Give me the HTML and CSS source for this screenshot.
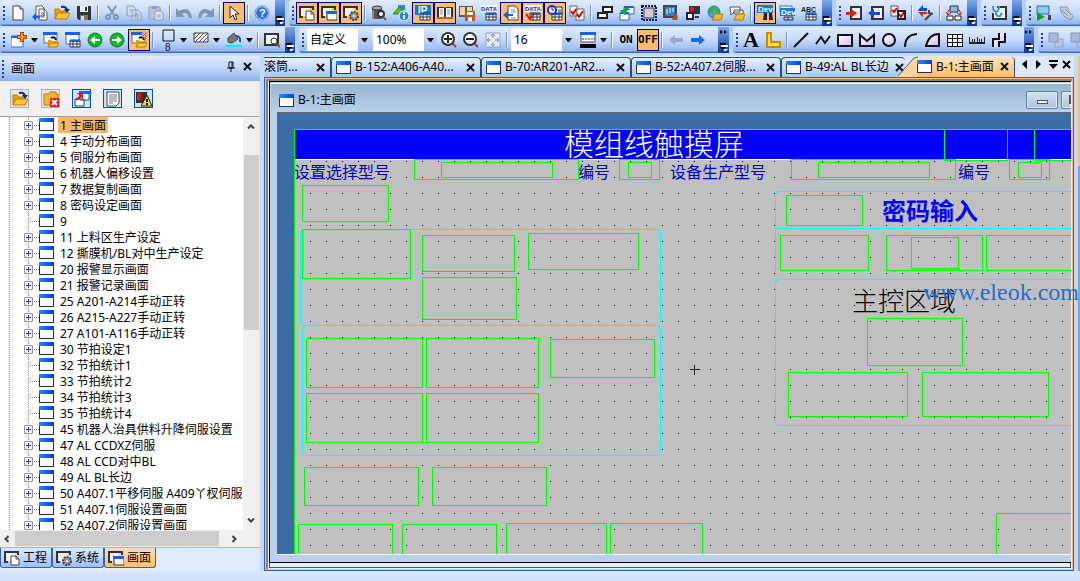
FILE: index.html
```html
<!DOCTYPE html>
<html lang="zh-CN">
<head>
<meta charset="utf-8">
<title>画面设计</title>
<link rel="stylesheet" href="styles.css">
</head>
<body>
<svg class="defs" aria-hidden="true">
  <defs>
    <linearGradient id="g-win" x1="0" x2="1"><stop offset="0" stop-color="#2f86ff"/><stop offset="1" stop-color="#0040e8"/></linearGradient>
    <linearGradient id="g-lilac" x1="0" x2="1" y2="1"><stop offset="0" stop-color="#fff"/><stop offset="1" stop-color="#d3b8f5"/></linearGradient>
    <pattern id="grid" width="16" height="16" patternUnits="userSpaceOnUse"><rect width="1" height="1" fill="#000"/></pattern>
    <pattern id="hatch" width="4" height="4" patternUnits="userSpaceOnUse"><path d="M-1 5L5-1M-1 1L1-1M3 5L5 3" stroke="#555"/></pattern>
  </defs>
  <symbol id="win" viewBox="0 0 15 13"><path d="M0 0h15v13H0z" fill="#26304a"/><path d="M1 4h13v8H1z" fill="#fbfbfe"/><path d="M0 0h15v4H0z" fill="url(#g-win)"/></symbol>
  <symbol id="new" viewBox="0 0 16 16"><path d="M3 1h7l3 3v11H3z" fill="#fff" stroke="#444"/><path d="M10 1v3h3" fill="#ccc" stroke="#444"/></symbol>
  <symbol id="pages" viewBox="0 0 16 16"><path d="M4 1h6l2 2v8H4zM7 4h5l3 3v8H7z" fill="#fff" stroke="#555"/><path d="M9 8h4M9 10h4M9 12h4" stroke="#777"/><path d="M8 11H4V8L0 12l4 4v-3h4z" fill="#1460e0"/></symbol>
  <symbol id="open" viewBox="0 0 16 16"><path d="M1 14V4h4l1 2h7v3" fill="#f0a000" stroke="#c07800"/><path d="M1 14l3-6h12l-3 6z" fill="#ffc83c" stroke="#c07800"/><path d="M7 2q5-1 6 3" fill="none" stroke="#0a2c90" stroke-width="2"/><path d="M10 4h6l-3 4z" fill="#0a2c90"/></symbol>
  <symbol id="save" viewBox="0 0 16 16"><path d="M1 1h14v14H3l-2-2z" fill="#333"/><path d="M4 1h8v6H4z" fill="#e8eef8"/><path d="M9 2h2v4H9z" fill="#333"/><path d="M4 10h8v5H4z" fill="#777"/><path d="M5 11h3v4H5z" fill="#ddd"/></symbol>
  <symbol id="cut" viewBox="0 0 16 16"><path d="M4 1l6 9M12 1L6 10" stroke="#8093b5" stroke-width="2"/><circle cx="4" cy="12" r="2" fill="none" stroke="#8093b5" stroke-width="2"/><circle cx="12" cy="12" r="2" fill="none" stroke="#8093b5" stroke-width="2"/></symbol>
  <symbol id="copy" viewBox="0 0 16 16"><path d="M1 1h6l3 3v7H1zM6 5h6l3 3v7H6z" fill="#d2ddf0" stroke="#8d9dbb"/><path d="M3 5h3M8 9h5M8 11h5M8 13h5" stroke="#8d9dbb"/></symbol>
  <symbol id="paste" viewBox="0 0 16 16"><path d="M1 2h11v12H1z" fill="#b8c6dd" stroke="#8d9dbb"/><path d="M4 1h5v3H4z" fill="#8d9dbb"/><path d="M7 6h6l2 2v7H7z" fill="#dce5f4" stroke="#8d9dbb"/><path d="M9 10h4M9 12h4" stroke="#8d9dbb"/></symbol>
  <symbol id="undo" viewBox="0 0 16 16"><path d="M0 3v9h9L6 9q5-3 7 4h3Q14 0 3 6z" fill="#8093b5"/></symbol>
  <symbol id="redo" viewBox="0 0 16 16"><path d="M16 3v9H7l3-3Q5 6 3 13H0Q2 0 13 6z" fill="#8093b5"/></symbol>
  <symbol id="arrow" viewBox="0 0 16 16"><path d="M4 1v12l3-3 2 5 2-1-2-5h4z" fill="#fff" stroke="#222"/></symbol>
  <symbol id="help" viewBox="0 0 16 16"><circle cx="8" cy="8" r="7" fill="#fff" stroke="#5a80c0"/><circle cx="8" cy="8" r="6" fill="#2b6fe0"/><text class="i-help" x="5" y="12">?</text></symbol>
  <symbol id="projpage" viewBox="0 0 16 16"><path d="M4 12H1V2h13v3" fill="none" stroke="#333" stroke-width="2"/><path d="M2 3h9v8H2z" fill="#eee"/><path d="M7 6h5l3 3v6H7z" fill="#fff" stroke="#444"/><path d="M12 6v3h3" fill="none" stroke="#444"/></symbol>
  <symbol id="projwin" viewBox="0 0 16 16"><path d="M4 12H1V2h13v3" fill="none" stroke="#333" stroke-width="2"/><path d="M2 3h9v8H2z" fill="#eee"/><path d="M6 7h10v8H6z" fill="#fff" stroke="#333"/><path d="M5 6h11v3H5z" fill="#1763f0"/></symbol>
  <symbol id="projgear" viewBox="0 0 16 16"><path d="M4 12H1V2h13v3" fill="none" stroke="#333" stroke-width="2"/><path d="M2 3h9v8H2z" fill="#eee"/><circle cx="11" cy="11" r="4" fill="#999" stroke="#444" stroke-width="2" stroke-dasharray="2 1"/><circle cx="11" cy="11" r="1" fill="#fff"/></symbol>
  <symbol id="dbsearch" viewBox="0 0 16 16"><path d="M1 3h10v11H1z" fill="#555"/><ellipse cx="6" cy="3" rx="5" ry="2" fill="#aaa" stroke="#333"/><path d="M2 5v9" stroke="#bbb"/><circle cx="10" cy="9" r="3" fill="#fff" stroke="#333" stroke-width="2"/><path d="M12 12l3 3" stroke="#85502c" stroke-width="2"/></symbol>
  <symbol id="shapesinfo" viewBox="0 0 16 16"><path d="M5 0h7v8H5z" fill="#2c83d9"/><path d="M6 2l6 7H0z" fill="#53c32d" stroke="#269612"/><circle cx="11" cy="11" r="5" fill="#2687d9" stroke="#fff"/><path d="M11 7v2M11 10v4" stroke="#fff" stroke-width="2"/></symbol>
  <symbol id="tbl" viewBox="0 0 16 16"><path d="M5 8h10v7H5z" fill="#fff" stroke="#333"/><path d="M5 8h10v2H5z" fill="#1763f0"/><path d="M5 12h10M8 9v6M12 9v6" stroke="#333"/></symbol>
  <symbol id="ip" viewBox="0 0 16 16"><path d="M0 0h16v10H0z" fill="#1778dc"/><text class="i-ip" x="3" y="9">IP</text><use href="#tbl"/></symbol>
  <symbol id="book" viewBox="0 0 16 16"><path d="M0 2h7l1 1 1-1h7v12H0z" fill="#333"/><path d="M2 3h5v9H2zM9 3h5v9H9z" fill="#fff"/><path d="M3 5h3M3 7h3M3 9h3M10 5h3M10 7h3M10 9h3" stroke="#888"/><path d="M0 13h16" stroke="#cf5f29" stroke-width="2"/></symbol>
  <symbol id="booksave" viewBox="0 0 16 16"><path d="M0 1h14v11H0z" fill="#555"/><path d="M1 2h5v8H1zM8 2h5v4H8z" fill="#ffd0a0"/><path d="M6 6h10v10H6z" fill="#d05018"/><path d="M8 7h6v3H8zM9 12h4v4H9z" fill="#fff"/></symbol>
  <symbol id="data" viewBox="0 0 16 16"><path d="M0 0h16v7H0z" fill="#fff"/><text class="i-data" x="0" y="6">DATA</text><use href="#tbl"/></symbol>
  <symbol id="datared" viewBox="0 0 16 16"><use href="#data"/><path d="M1 9l4 5 4-6" fill="none" stroke="#e01010" stroke-width="2"/></symbol>
  <symbol id="pageback" viewBox="0 0 16 16"><path d="M5 1h7l3 3v11H5z" fill="#fff" stroke="#444"/><path d="M8 5h4M8 7h5M8 13h5" stroke="#888"/><path d="M10 9H5V6l-5 4 5 4v-3h5z" fill="#1460e0"/></symbol>
  <symbol id="clocktbl" viewBox="0 0 16 16"><path d="M7 2h8v7H7z" fill="#fff" stroke="#333"/><path d="M11 5h3M11 7h3" stroke="#333"/><use href="#tbl"/><circle cx="5" cy="5" r="4" fill="#fff" stroke="#1430d8" stroke-width="2"/><path d="M5 2v3h2" fill="none" stroke="#222"/></symbol>
  <symbol id="checks" viewBox="0 0 16 16"><path d="M1 1h7v10H1zM7 4h8v11H7z" fill="#fff" stroke="#666"/><path d="M2 6l2 3 3-5M8 9l2 3 4-6" fill="none" stroke="#e00000" stroke-width="2"/></symbol>
  <symbol id="twobox" viewBox="0 0 16 16"><path d="M6 2h9v5H6zM1 8h9v5H1z" fill="#fff" stroke="#222" stroke-width="2"/></symbol>
  <symbol id="winback" viewBox="0 0 16 16"><path d="M5 2h10v7H5zM1 8h9v7H1z" fill="#fff" stroke="#2f6cad"/><path d="M5 2h10M1 8h9" stroke="#1763f0" stroke-width="2"/><path d="M12 5Q7 0 4 5H1l4 5 4-5H7" fill="#12a632"/></symbol>
  <symbol id="selbox" viewBox="0 0 16 16"><path d="M1 1h14v14H1z" fill="none" stroke="#0a1c70" stroke-width="2" stroke-dasharray="2 1"/><path d="M3 3h10v10H3z" fill="#d0d0d0" stroke="#334"/></symbol>
  <symbol id="chip" viewBox="0 0 16 16"><path d="M1 1h12v11H1z" fill="#2b7fc4" stroke="#444" stroke-width="2"/><path d="M4 4v5M7 3v5M10 3v4" stroke="#fff"/><path d="M9 15l3-7 3 3-1 4z" fill="#a35825"/></symbol>
  <symbol id="redblack" viewBox="0 0 16 16"><path d="M4 1h11v8H4z" fill="#333"/><path d="M5 2h4v6H5z" fill="#d01818"/><path d="M2 8h6v6H2z" fill="#fff" stroke="#222" stroke-width="2"/><path d="M10 12h4" stroke="#333" stroke-width="2"/></symbol>
  <symbol id="globe" viewBox="0 0 16 16"><circle cx="7" cy="7" r="6" fill="#4aa0e0" stroke="#287bb0"/><path d="M2 4q4-5 6 0l-2 5q-5 0-4-5M9 2l4 4-4 2z" fill="#37b337"/><path d="M5 15l3-6h8l-2 6z" fill="#f6b62c" stroke="#b77808"/></symbol>
  <symbol id="bubbles" viewBox="0 0 16 16"><path d="M1 2h10v5H5l-3 3zM5 5h9v4H5z" fill="#fff" stroke="#555"/><path d="M5 15l3-6h8l-2 6z" fill="#f6b62c" stroke="#b77808"/></symbol>
  <symbol id="devfind" viewBox="0 0 16 16"><path d="M0 0h16v8H0z" fill="#1778dc"/><text class="i-dev" x="1" y="7">Dev</text><path d="M7 8h3v7H6zM12 8h3l1 7h-4z" fill="#222"/></symbol>
  <symbol id="devtbl" viewBox="0 0 16 16"><path d="M1 1h12v6H1z" fill="#fff" stroke="#1778dc"/><path d="M1 3h15v8H1z" fill="#1778dc"/><text class="i-dev" x="2" y="10">Dev</text><path d="M5 12h9M5 15h9M5 12v3M9 12v3M14 12v3" stroke="#333"/></symbol>
  <symbol id="abc" viewBox="0 0 16 16"><text class="i-abc" x="0" y="7">ABC</text><use href="#tbl"/></symbol>
  <symbol id="boxin" viewBox="0 0 16 16"><path d="M5 2h10v12H5z" fill="#eee" stroke="#333" stroke-width="2"/><path d="M0 7h5V4l6 4-6 5v-3H0z" fill="#e61c1c"/></symbol>
  <symbol id="boxout" viewBox="0 0 16 16"><path d="M4 2h11v12H4z" fill="#eee" stroke="#333" stroke-width="2"/><path d="M12 7H6V4L0 8l6 5v-3h6z" fill="#1648e8"/></symbol>
  <symbol id="verify" viewBox="0 0 16 16"><path d="M1 1h7v10H1z" fill="#fff" stroke="#555"/><path d="M8 6h7v8H8z" fill="#fff" stroke="#222" stroke-width="2"/><path d="M2 5l2 2 3-4M9 9l2 3 3-5" fill="none" stroke="#e00000" stroke-width="2"/></symbol>
  <symbol id="wrench" viewBox="0 0 16 16"><path d="M0 5l5-5v3h4v3H0z" fill="#1648e8"/><path d="M9 7H0l5 5V9h4z" fill="#e61c1c"/><path d="M7 15l7-7M11 5v3l4 1" stroke="#444" stroke-width="2" fill="none"/></symbol>
  <symbol id="net" viewBox="0 0 16 16"><path d="M4 1h8v6H4z" fill="#7ec0f0" stroke="#333"/><path d="M1 11h6v4H1zM9 11h6v4H9z" fill="#fff" stroke="#222"/><path d="M4 4Q1 5 2 10M12 4q3 1 2 6M0 7l2 3 3-2M11 8l3 2 2-3" stroke="#e01818" fill="none"/></symbol>
  <symbol id="steth" viewBox="0 0 16 16"><path d="M6 2h9v12H2V8" fill="#f3f3f3" stroke="#333" stroke-width="2"/><path d="M2 1q0 5 3 6 3-1 3-6M5 7q0 5 4 4l2-3" fill="none" stroke="#4690c8" stroke-width="2"/></symbol>
  <symbol id="run" viewBox="0 0 16 16"><path d="M1 1h12v8H1z" fill="#8ccaf5" stroke="#2b6cb0"/><path d="M1 7l8 5-8 4z" fill="#0aa21c"/><path d="M12 10h3v5h-3z" fill="#444"/></symbol>
  <symbol id="hand" viewBox="0 0 16 16"><path d="M2 2h7l2 4 4 5-2 4-6-3-4-5z" fill="#c0cbe0" stroke="#8795b0"/><path d="M4 5l6 6M7 4l6 6" stroke="#8795b0"/></symbol>
  <symbol id="winplus" viewBox="0 0 16 16"><path d="M0 4h12v11H0z" fill="#fff" stroke="#4070b0"/><path d="M0 4h12v2H0z" fill="#1763f0"/><path d="M11 0v10M6 5h10" stroke="#a84800" stroke-width="4"/><path d="M11 1v8M7 5h8" stroke="#ff9030" stroke-width="2"/></symbol>
  <symbol id="winopen" viewBox="0 0 16 16"><path d="M1 1h13v10H1z" fill="#fff" stroke="#4070b0"/><path d="M0 0h14v3H0z" fill="#1763f0"/><path d="M5 15V8h3l1 1h5v2" fill="#f0a000"/><path d="M5 15l2-4h9l-2 4z" fill="#ffc83c" stroke="#b77808"/><path d="M8 6q4-2 5 2" stroke="#123" stroke-width="2" fill="none"/></symbol>
  <symbol id="wintable" viewBox="0 0 16 16"><path d="M1 1h13v11H1z" fill="#fff" stroke="#4070b0"/><path d="M0 0h15v3H0z" fill="#1763f0"/><use href="#tbl"/></symbol>
  <symbol id="prev" viewBox="0 0 16 16"><circle cx="8" cy="8" r="7" fill="#14b52a" stroke="#088a1c"/><path d="M3 8l5-4v3h5v2H8v3z" fill="#fff"/></symbol>
  <symbol id="next" viewBox="0 0 16 16"><circle cx="8" cy="8" r="7" fill="#14b52a" stroke="#088a1c"/><path d="M13 8L8 4v3H3v2h5v3z" fill="#fff"/></symbol>
  <symbol id="winclose" viewBox="0 0 16 16"><use href="#winopen"/><path d="M11 0h5v5h-5z" fill="#fff" stroke="#d05050"/><path d="M12 1l3 3M15 1l-3 3" stroke="#d01818"/></symbol>
  <symbol id="line8" viewBox="0 0 16 22"><path d="M3 1h11v11H3z" fill="none" stroke="#111"/><text class="i-eight" x="5" y="22">8</text></symbol>
  <symbol id="fill" viewBox="0 0 16 16"><path d="M1 1h14v9H1z" fill="#eee"/><path d="M1 1h14v9H1z" fill="url(#hatch)" stroke="#444"/><path d="M0 13h16v2H0z" fill="#bbb"/></symbol>
  <symbol id="bucket" viewBox="0 0 16 16"><path d="M2 6l6-5 4 6-6 4-4-1z" fill="#777" stroke="#444"/><path d="M10 4q5 0 4 6" fill="none" stroke="#264bb0" stroke-width="2"/><path d="M0 13h16v2H0z" fill="#0ef"/></symbol>
  <symbol id="preview" viewBox="0 0 16 16"><path d="M1 2h13v11H1z" fill="#f2f2f2" stroke="#333" stroke-width="2"/><circle cx="10" cy="9" r="3" fill="#fff" stroke="#333"/><path d="M12 11l4 4" stroke="#85502c" stroke-width="2"/></symbol>
  <symbol id="zin" viewBox="0 0 16 16"><path d="M11 11l4 4" stroke="#85502c" stroke-width="2"/><circle cx="7" cy="7" r="6" fill="#fff" stroke="#333" stroke-width="2"/><path d="M3 7h8M7 3v8" stroke="#222" stroke-width="2"/></symbol>
  <symbol id="zout" viewBox="0 0 16 16"><path d="M11 11l4 4" stroke="#85502c" stroke-width="2"/><circle cx="7" cy="7" r="6" fill="#fff" stroke="#333" stroke-width="2"/><path d="M3 7h8" stroke="#222" stroke-width="2"/></symbol>
  <symbol id="fit" viewBox="0 0 16 16"><path d="M1 1h14v14H1z" fill="#e4ecf8" stroke="#91a5c8"/><path d="M8 2v4M8 10v4M2 8h4M10 8h4M6 4l2-2 2 2M6 12l2 2 2-2M4 6L2 8l2 2M12 6l2 2-2 2" fill="none" stroke="#748db8"/></symbol>
  <symbol id="linestyle" viewBox="0 0 16 16"><path d="M1 1h14v9H1z" fill="#fff" stroke="#444"/><path d="M0 0h16v3H0z" fill="#1763f0"/><path d="M2 7h13" stroke="#333" stroke-dasharray="2 1"/><path d="M0 12h16v4H0z" fill="#000"/></symbol>
  <symbol id="aleft" viewBox="0 0 16 16"><path d="M1 8l6-5v3h8v4H7v3z" fill="#98a8c8"/></symbol>
  <symbol id="aright" viewBox="0 0 16 16"><path d="M15 8L9 3v3H1v4h8v3z" fill="#0f6cf5"/></symbol>
  <symbol id="ell" viewBox="0 0 16 16"><path d="M2 1h4v9h9v5H2z" fill="#ffe04a" stroke="#c88a00" stroke-width="2"/></symbol>
  <symbol id="dline" viewBox="0 0 16 16"><path d="M1 15L15 1" stroke="#111" stroke-width="2"/></symbol>
  <symbol id="zig" viewBox="0 0 16 16"><path d="M1 12l5-7 4 6 5-7" fill="none" stroke="#111" stroke-width="2"/></symbol>
  <symbol id="rect" viewBox="0 0 16 16"><path d="M1 3h14v11H1z" fill="url(#g-lilac)" stroke="#111" stroke-width="2"/></symbol>
  <symbol id="poly" viewBox="0 0 16 16"><path d="M1 3l7 6 7-6v11H1z" fill="url(#g-lilac)" stroke="#111" stroke-width="2"/></symbol>
  <symbol id="circ" viewBox="0 0 16 16"><circle cx="8" cy="8" r="6" fill="url(#g-lilac)" stroke="#111" stroke-width="2"/></symbol>
  <symbol id="arc" viewBox="0 0 16 16"><path d="M2 15Q2 3 14 2" fill="none" stroke="#111" stroke-width="2"/></symbol>
  <symbol id="sector" viewBox="0 0 16 16"><path d="M1 14Q4 2 14 2v12z" fill="url(#g-lilac)" stroke="#111" stroke-width="2"/></symbol>
  <symbol id="table" viewBox="0 0 16 16" shape-rendering="crispEdges"><path d="M0 2h16v13H0z" fill="#111"/><path d="M1 3h4v3H1zM6 3h4v3H6zM11 3h4v3h-4zM1 7h4v3H1zM6 7h4v3H6zM11 7h4v3h-4zM1 11h4v3H1zM6 11h4v3H6zM11 11h4v3h-4z" fill="#f4eefc"/></symbol>
  <symbol id="ruler" viewBox="0 0 16 16" shape-rendering="crispEdges"><path d="M0 10h16v2H0zM0 5h1v5H0zM3 7h1v3H3zM5 7h1v3H5zM8 5h1v5H8zM10 7h1v3h-1zM12 7h1v3h-1zM15 5h1v5h-1z" fill="#222"/></symbol>
  <symbol id="pipe" viewBox="0 0 16 16"><path d="M8 1h6v9H8v5H2V7h6z" fill="url(#g-lilac)"/><path d="M8 1v6H2v8M14 1v9H8v5" fill="none" stroke="#111" stroke-width="2"/></symbol>
  <symbol id="stack" viewBox="0 0 16 16"><path d="M7 7h8v8H7z" fill="#b8c6e0" stroke="#8fa2c8"/><path d="M1 1h9v9H1z" fill="#a9b9d8" stroke="#8094c0"/></symbol>
  <symbol id="fclose" viewBox="0 0 16 16"><path d="M1 14V3h5l1-2h6v2h2v11z" fill="#f6b62c" stroke="#b77808"/><path d="M7 7h9v9H7z" fill="#d81c1c"/><path d="M9 9l5 5M14 9l-5 5" stroke="#fff" stroke-width="2"/></symbol>
  <symbol id="jump" viewBox="0 0 16 16"><path d="M6 1h9v8H6zM1 8h9v7H1z" fill="#fff" stroke="#26406c"/><path d="M5 0h11v3H5z" fill="#1763f0"/><path d="M2 9l5-4" stroke="#d81c1c" stroke-width="2"/><path d="M3 2h6v6z" fill="#d81c1c"/></symbol>
  <symbol id="note" viewBox="0 0 16 16"><path d="M2 1h12v11l-3 3H2z" fill="#fff" stroke="#444"/><path d="M4 4h8M4 6h8M4 8h8M4 10h8M4 12h4" stroke="#777"/></symbol>
  <symbol id="warn" viewBox="0 0 16 16"><path d="M0 1h11v11H0z" fill="#333"/><path d="M1 2h4v7H1z" fill="#d81c1c"/><path d="M11 4l5 11H5z" fill="#ffd21c" stroke="#222"/><path d="M11 8v3M11 12v2" stroke="#111" stroke-width="2"/></symbol>
  <symbol id="pin" viewBox="0 0 8 12"><path d="M2 1h4v6H2zM5 1v6M0 7h8M4 7v4" fill="none" stroke="#111"/></symbol>
  <symbol id="x" viewBox="0 0 9 9"><path d="M1 1l7 7M8 1L1 8" stroke="#111" stroke-width="2"/></symbol>
  <symbol id="down" viewBox="0 0 7 4"><path d="M0 0h7L4 4H3z" fill="#000"/></symbol>
  <symbol id="more" viewBox="0 0 8 8"><path d="M1 2h7v2H1zM3 6h5L5 9z" fill="#fff"/><path d="M0 0h6v2H0zM0 4h6L3 7z" fill="#000"/></symbol>
  <symbol id="chev" viewBox="0 0 8 6"><path d="M0 0l3 2-3 2zM4 0l3 2-3 2z" fill="#111"/></symbol>
  <symbol id="sup" viewBox="0 0 8 5"><path d="M1 5l3-3 3 3" fill="none" stroke="#444" stroke-width="2"/></symbol>
</svg>

<header class="toolbars">
  <div class="row">
    <div class="bar"><i class="grip"></i>
      <button class="tb" title="新建"><svg><use href="#new"/></svg></button><button class="tb"><svg><use href="#pages"/></svg></button><button class="tb"><svg><use href="#open"/></svg></button><button class="tb"><svg><use href="#save"/></svg></button><i class="sep"></i><button class="tb"><svg><use href="#cut"/></svg></button><button class="tb"><svg><use href="#copy"/></svg></button><button class="tb"><svg><use href="#paste"/></svg></button><i class="sep"></i><button class="tb"><svg><use href="#undo"/></svg></button><button class="tb"><svg><use href="#redo"/></svg></button><i class="sep"></i><button class="tb on"><svg><use href="#arrow"/></svg></button><i class="sep"></i><button class="tb"><svg><use href="#help"/></svg></button>
      <button class="cap"><svg><use href="#more"/></svg></button></div>
    <div class="bar"><i class="grip"></i>
      <button class="tb on"><svg><use href="#projpage"/></svg></button><button class="tb on"><svg><use href="#projwin"/></svg></button><button class="tb on"><svg><use href="#projgear"/></svg></button><i class="sep"></i><button class="tb"><svg><use href="#dbsearch"/></svg></button><button class="tb"><svg><use href="#shapesinfo"/></svg></button><button class="tb on"><svg><use href="#ip"/></svg></button><button class="tb on"><svg><use href="#book"/></svg></button><button class="tb"><svg><use href="#booksave"/></svg></button><button class="tb"><svg><use href="#data"/></svg></button><button class="tb on"><svg><use href="#pageback"/></svg></button><button class="tb on"><svg><use href="#datared"/></svg></button><button class="tb on"><svg><use href="#clocktbl"/></svg></button><button class="tb"><svg><use href="#checks"/></svg></button><i class="sep"></i><button class="tb"><svg><use href="#twobox"/></svg></button><button class="tb"><svg><use href="#winback"/></svg></button><button class="tb"><svg><use href="#selbox"/></svg></button><button class="tb"><svg><use href="#chip"/></svg></button><button class="tb"><svg><use href="#redblack"/></svg></button><button class="tb"><svg><use href="#globe"/></svg></button><button class="tb"><svg><use href="#bubbles"/></svg></button><i class="sep"></i><button class="tb on"><svg><use href="#devfind"/></svg></button><button class="tb"><svg><use href="#devtbl"/></svg></button><button class="tb"><svg><use href="#abc"/></svg></button>
      <button class="cap"><svg><use href="#more"/></svg></button></div>
    <div class="bar"><i class="grip"></i>
      <button class="tb"><svg><use href="#boxin"/></svg></button><button class="tb"><svg><use href="#boxout"/></svg></button><button class="tb"><svg><use href="#verify"/></svg></button><i class="sep"></i><button class="tb"><svg><use href="#wrench"/></svg></button><i class="sep"></i><button class="tb"><svg><use href="#net"/></svg></button>
      <button class="cap"><svg><use href="#more"/></svg></button></div>
    <div class="bar"><i class="grip"></i><button class="tb"><svg><use href="#steth"/></svg></button><button class="cap"><svg><use href="#more"/></svg></button></div>
    <div class="bar last"><i class="grip"></i><button class="tb"><svg><use href="#run"/></svg></button><button class="tb"><svg><use href="#hand"/></svg></button></div>
  </div>
  <div class="row">
    <div class="bar"><i class="grip"></i>
      <button class="tb drop"><svg><use href="#winplus"/></svg><svg class="dn"><use href="#down"/></svg></button><button class="tb"><svg><use href="#winopen"/></svg></button><button class="tb"><svg><use href="#wintable"/></svg></button><button class="tb"><svg><use href="#prev"/></svg></button><button class="tb"><svg><use href="#next"/></svg></button><button class="tb on"><svg><use href="#winclose"/></svg></button><i class="sep"></i><button class="tb drop"><svg class="tall"><use href="#line8"/></svg><svg class="dn"><use href="#down"/></svg></button><button class="tb drop"><svg><use href="#fill"/></svg><svg class="dn"><use href="#down"/></svg></button><button class="tb drop"><svg><use href="#bucket"/></svg><svg class="dn"><use href="#down"/></svg></button><i class="sep"></i><button class="tb"><svg><use href="#preview"/></svg></button>
      <button class="cap"><svg><use href="#more"/></svg></button></div>
    <div class="bar"><i class="grip"></i>
      <span class="combo"><select aria-label="缩放方式"><option>自定义</option></select><b><svg class="dn"><use href="#down"/></svg></b></span>
      <span class="combo"><select aria-label="缩放比例"><option>100%</option></select><b><svg class="dn"><use href="#down"/></svg></b></span>
      <button class="tb"><svg><use href="#zin"/></svg></button><button class="tb"><svg><use href="#zout"/></svg></button><button class="tb"><svg><use href="#fit"/></svg></button><i class="sep"></i>
      <span class="combo"><select aria-label="网格"><option>16</option></select><b><svg class="dn"><use href="#down"/></svg></b></span>
      <button class="tb drop"><svg><use href="#linestyle"/></svg><svg class="dn"><use href="#down"/></svg></button><i class="sep"></i><button class="tb word"><span>ON</span></button><button class="tb on word"><span>OFF</span></button><i class="sep"></i><button class="tb"><svg><use href="#aleft"/></svg></button><button class="tb"><svg><use href="#aright"/></svg></button>
      <button class="cap far"><svg class="chev"><use href="#chev"/></svg><svg><use href="#more"/></svg></button></div>
    <div class="bar"><i class="grip"></i>
      <button class="tb serif">A</button><button class="tb"><svg><use href="#ell"/></svg></button><i class="sep"></i><button class="tb"><svg><use href="#dline"/></svg></button><button class="tb"><svg><use href="#zig"/></svg></button><button class="tb"><svg><use href="#rect"/></svg></button><button class="tb"><svg><use href="#poly"/></svg></button><button class="tb"><svg><use href="#circ"/></svg></button><button class="tb"><svg><use href="#arc"/></svg></button><button class="tb"><svg><use href="#sector"/></svg></button><button class="tb"><svg><use href="#table"/></svg></button><button class="tb"><svg><use href="#ruler"/></svg></button><button class="tb"><svg><use href="#pipe"/></svg></button>
      <button class="cap farther"><svg class="chev"><use href="#chev"/></svg><svg><use href="#more"/></svg></button></div>
    <div class="bar last"><i class="grip"></i><button class="tb"><svg><use href="#stack"/></svg></button><button class="tb"><svg><use href="#stack"/></svg></button></div>
  </div>
</header>

<main>
  <aside class="dock">
    <div class="dock-head"><i class="grip"></i><h2>画面</h2><button class="mini"><svg class="pin"><use href="#pin"/></svg></button><button class="mini"><svg class="x"><use href="#x"/></svg></button></div>
    <div class="dock-tools"><button><svg><use href="#open"/></svg></button><button><svg><use href="#fclose"/></svg></button><button class="hot"><svg><use href="#jump"/></svg></button><button class="hot"><svg><use href="#note"/></svg></button><button class="hot"><svg><use href="#warn"/></svg></button></div>
    <div class="tree-wrap">
      <ul class="tree" id="tree">
        <li class="sel"><button class="plus"></button><svg><use href="#win"/></svg><span>1 主画面</span></li>
        <li><button class="plus"></button><svg><use href="#win"/></svg><span>4 手动分布画面</span></li>
        <li><button class="plus"></button><svg><use href="#win"/></svg><span>5 伺服分布画面</span></li>
        <li><button class="plus"></button><svg><use href="#win"/></svg><span>6 机器人偏移设置</span></li>
        <li><button class="plus"></button><svg><use href="#win"/></svg><span>7 数据复制画面</span></li>
        <li><button class="plus"></button><svg><use href="#win"/></svg><span>8 密码设定画面</span></li>
        <li class="leaf"><svg><use href="#win"/></svg><span>9</span></li>
        <li><button class="plus"></button><svg><use href="#win"/></svg><span>11 上料区生产设定</span></li>
        <li><button class="plus"></button><svg><use href="#win"/></svg><span>12 撕膜机/BL对中生产设定</span></li>
        <li><button class="plus"></button><svg><use href="#win"/></svg><span>20 报警显示画面</span></li>
        <li><button class="plus"></button><svg><use href="#win"/></svg><span>21 报警记录画面</span></li>
        <li><button class="plus"></button><svg><use href="#win"/></svg><span>25 A201-A214手动正转</span></li>
        <li><button class="plus"></button><svg><use href="#win"/></svg><span>26 A215-A227手动正转</span></li>
        <li><button class="plus"></button><svg><use href="#win"/></svg><span>27 A101-A116手动正转</span></li>
        <li><button class="plus"></button><svg><use href="#win"/></svg><span>30 节拍设定1</span></li>
        <li class="leaf"><svg><use href="#win"/></svg><span>32 节拍统计1</span></li>
        <li class="leaf"><svg><use href="#win"/></svg><span>33 节拍统计2</span></li>
        <li class="leaf"><svg><use href="#win"/></svg><span>34 节拍统计3</span></li>
        <li class="leaf"><svg><use href="#win"/></svg><span>35 节拍统计4</span></li>
        <li><button class="plus"></button><svg><use href="#win"/></svg><span>45 机器人治具供料升降伺服设置</span></li>
        <li><button class="plus"></button><svg><use href="#win"/></svg><span>47 AL CCDXZ伺服</span></li>
        <li><button class="plus"></button><svg><use href="#win"/></svg><span>48 AL CCD对中BL</span></li>
        <li><button class="plus"></button><svg><use href="#win"/></svg><span>49 AL BL长边</span></li>
        <li><button class="plus"></button><svg><use href="#win"/></svg><span>50 A407.1平移伺服 A409丫杈伺服</span></li>
        <li><button class="plus"></button><svg><use href="#win"/></svg><span>51 A407.1伺服设置画面</span></li>
        <li><button class="plus"></button><svg><use href="#win"/></svg><span>52 A407.2伺服设置画面</span></li>
      </ul>
      <div class="vscroll"><svg><use href="#sup"/></svg><i class="thumb"></i><svg class="flip"><use href="#sup"/></svg></div>
    </div>
    <div class="hscroll"><svg class="left"><use href="#sup"/></svg><i class="thumb"></i><svg class="right"><use href="#sup"/></svg></div>
    <nav class="dock-tabs"><button><svg><use href="#projpage"/></svg>工程</button><button><svg><use href="#projgear"/></svg>系统</button><button class="cur"><svg><use href="#projwin"/></svg>画面</button></nav>
  </aside>

  <section class="docs">
    <nav class="doc-tabs">
      <div class="tab first"><span>滚筒...</span><button><svg class="x"><use href="#x"/></svg></button></div>
      <div class="tab"><svg class="w"><use href="#win"/></svg><span>B-152:A406-A40...</span><button><svg class="x"><use href="#x"/></svg></button></div>
      <div class="tab"><svg class="w"><use href="#win"/></svg><span>B-70:AR201-AR2...</span><button><svg class="x"><use href="#x"/></svg></button></div>
      <div class="tab"><svg class="w"><use href="#win"/></svg><span>B-52:A407.2伺服...</span><button><svg class="x"><use href="#x"/></svg></button></div>
      <div class="tab beside"><svg class="w"><use href="#win"/></svg><span>B-49:AL BL长边</span><button><svg class="x"><use href="#x"/></svg></button></div>
      <div class="tab cur"><svg class="slant" viewBox="0 0 20 21" preserveAspectRatio="none"><path d="M0 21L15 3q2-2 5-2v20z" fill="#ffd49a"/><path d="M0 20L15 3q2-2 5-2" fill="none" stroke="#3b61a8"/></svg><svg class="w"><use href="#win"/></svg><span>B-1:主画面</span><button><svg class="x"><use href="#x"/></svg></button></div>
      <div class="tab-nav"><svg viewBox="0 0 50 10"><path d="M6 0v9L1 4zM15 0v9l5-5zM28 0h9v2h-9zM28 4h9l-5 5z" fill="#000"/><path d="M42 1l7 7M49 1l-7 7" stroke="#000" stroke-width="2"/></svg></div>
    </nav>
    <div class="mdi">
      <article class="window">
        <div class="caption"><svg class="w"><use href="#win"/></svg><h1>B-1:主画面</h1><button class="min" title="最小化"><i></i></button><button class="max" title="最大化"><i></i></button></div>
        <div class="stage">
          <svg class="canvas" shape-rendering="crispEdges">
            <rect width="100%" height="100%" fill="#c0c0c0"/>
            <rect width="100%" height="30" fill="#00f"/>
            <rect y="30" width="100%" height="1" fill="#fff"/>
            <text class="t-title" x="270" y="26">模组线触摸屏</text>
            <rect width="100%" height="100%" fill="url(#grid)"/>
            <text class="t-label" x="0" y="49">设置选择型号</text>
            <text class="t-label" x="284" y="49">编号</text>
            <text class="t-label" x="376" y="49">设备生产型号</text>
            <text class="t-label" x="664" y="49">编号</text>
            <text class="t-pass" x="588" y="91">密码输入</text>
            <text class="t-main" x="558" y="182">主控区域</text>
            <g transform="translate(.5 .5)" fill="none">
              <g stroke="#0ff">
                <rect x="6" y="100" width="360" height="96" rx="4"/><rect x="8" y="196" width="358" height="130" rx="4"/>
                <rect x="481" y="62" width="900" height="88" rx="4"/><rect x="481" y="150" width="900" height="146" rx="4"/><path d="M481 99h900"/>
              </g>
              <g stroke="#0f0">
                <path d="M0 900V0h1800"/>
                <rect x="650" y="0" width="63" height="31"/><rect x="740" y="0" width="640" height="31"/>
                <rect x="120" y="30" width="164" height="20"/><rect x="147" y="33" width="111" height="15"/><rect x="325" y="30" width="40" height="20"/><rect x="334" y="33" width="23" height="15"/>
                <rect x="497" y="30" width="164" height="20"/><rect x="524" y="33" width="111" height="15"/><rect x="715" y="30" width="40" height="20"/><rect x="724" y="33" width="23" height="15"/>
                <rect x="8" y="56" width="86" height="36"/><rect x="8" y="100" width="108" height="49"/><rect x="128" y="106" width="92" height="36"/><rect x="234" y="104" width="110" height="36"/><rect x="128" y="148" width="94" height="42"/>
                <rect x="12" y="209" width="116" height="49"/><rect x="132" y="209" width="112" height="49"/><rect x="256" y="210" width="104" height="38"/><rect x="12" y="264" width="116" height="49"/><rect x="132" y="264" width="112" height="49"/>
                <rect x="10" y="338" width="114" height="38"/><rect x="138" y="338" width="114" height="38"/>
                <rect x="4" y="395" width="94" height="40"/><rect x="108" y="395" width="94" height="40"/><rect x="212" y="394" width="100" height="40"/><rect x="316" y="394" width="92" height="40"/><rect x="702" y="384" width="400" height="60"/>
                <rect x="492" y="66" width="76" height="30"/><rect x="486" y="106" width="88" height="35"/><rect x="592" y="106" width="96" height="35"/><rect x="617" y="108" width="47" height="31"/><rect x="692" y="106" width="600" height="35"/>
                <rect x="573" y="189" width="95" height="47"/><rect x="494" y="243" width="119" height="44"/><rect x="628" y="243" width="126" height="44"/>
              </g>
              <path d="M395 240h10M400 235v10" stroke="#222"/>
            </g>
          </svg>
        </div>
      </article>
    </div>
    <a class="mark" href="#tree">www.eleok.com</a>
  </section>
  <div class="edge"><i></i></div>
</main>
<footer class="status"></footer>
</body>
</html>
```

FILE: styles.css
```css
* { box-sizing: border-box; }
body {
  margin: 0;
  height: 100vh;
  display: flex;
  flex-direction: column;
  overflow: hidden;
  background: #c4dafa;
  color: #000;
  font: 12px/16px "Noto Sans", "Noto Sans CJK SC", sans-serif;
}
button { font: inherit; color: inherit; margin: 0; padding: 0; border: 0; background: none; }
h1, h2 { margin: 0; font: inherit; }
svg { flex: none; }
.defs { position: absolute; width: 0; height: 0; }

/* lettering inside icons */
.i-data { font: bold 6px "Liberation Sans", sans-serif; fill: #0020c8; }
.i-dev { font: bold 8px "Liberation Sans", sans-serif; fill: #fff; }
.i-abc { font: bold 7px "Liberation Sans", sans-serif; fill: #222; }
.i-ip { font: bold 10px "Liberation Sans", sans-serif; fill: #fff; }
.i-help { font: bold 11px "Liberation Sans", sans-serif; fill: #fff; }
.i-eight { font: 10px "Liberation Sans", sans-serif; fill: #111; }

/* toolbars */
.toolbars { display: flex; flex-direction: column; gap: 1px; margin-bottom: 3px; }
.row { display: flex; gap: 4px; background: #b5cff7; }
.bar {
  flex: none;
  display: flex;
  align-items: center;
  height: 26px;
  background: linear-gradient(#dfebfc, #c6dafa 50%, #93b6ee 92%, #3f6cc0 97%);
  border-radius: 3px 0 0 3px;
}
.bar.last { flex: 1 0 auto; }
.grip {
  flex: none;
  width: 2px;
  height: 15px;
  margin: 0 2px 0 3px;
  background: repeating-linear-gradient(#27418f 0 2px, transparent 2px 4px);
}
.sep { flex: none; width: 2px; height: 16px; margin: 0 2px; background: linear-gradient(90deg, #7396d2 50%, #f4f8ff 50%); }
.tb { flex: none; display: flex; align-items: center; justify-content: center; width: 22px; height: 22px; }
.tb svg { width: 16px; height: 16px; }
.tb .tall { height: 22px; }
.tb.on { border: 1px solid #000080; background: #ffbd69; }
.tb.drop { width: 33px; gap: 4px; padding-left: 1px; }
svg.dn, .tb svg.dn { width: 7px; height: 4px; }
.tb.word { font: bold 11px/16px "DejaVu Sans Mono", monospace; }
.tb.serif { font: bold 22px/22px "Liberation Serif", serif; }
.cap {
  align-self: stretch;
  display: flex;
  flex-direction: column;
  align-items: center;
  justify-content: flex-end;
  width: 10px;
  margin-left: 2px;
  padding-bottom: 2px;
  background: linear-gradient(#7da6ec, #3f70c8 50%, #0a3598);
}
.cap svg { width: 8px; height: 8px; }
.cap .chev { height: 6px; margin-bottom: 7px; }
.cap.far { margin-left: 9px; width: 11px; }
.cap.farther { margin-left: 14px; }
.combo { position: relative; display: flex; width: 64px; height: 22px; margin: 0 1px; }
.combo select { width: 100%; border: 0; padding: 0 16px 0 3px; background: #fff; font: inherit; color: #000; appearance: none; border-radius: 0; }
.combo b {
  position: absolute; right: 0; top: 0; bottom: 0; width: 13px;
  display: flex; align-items: center; justify-content: center;
  background: linear-gradient(#d6e5fb, #9dbdf0); pointer-events: none;
}

/* layout */
main { flex: 1; min-height: 0; display: flex; gap: 4px; }
.status { flex: none; height: 10px; background: linear-gradient(#dce9fc, #cfe0fa); }

/* left dock */
.dock { flex: none; width: 260px; display: flex; flex-direction: column; min-height: 0; background: #dfeafb; }
.dock-head { display: flex; align-items: center; height: 25px; padding-right: 5px; background: linear-gradient(#dfebfc, #c0d6f9 50%, #8db1ec); }
.dock-head .grip { height: 18px; margin: 0 7px 0 2px; }
.dock-head h2 { flex: 1; line-height: 22px; }
.mini { display: flex; align-items: center; justify-content: center; width: 16px; height: 20px; margin-bottom: 4px; }
.pin { width: 8px; height: 12px; }
.x { width: 9px; height: 9px; }
.dock-tools { display: flex; gap: 12px; align-items: center; height: 36px; padding-left: 10px; margin-right: 1px; background: #f0f0f0; border-bottom: 1px solid #a0a0a0; }
.dock-tools button { display: flex; align-items: center; justify-content: center; width: 19px; height: 19px; border: 1px solid #b0b0b0; background: #e4e4e4; }
.dock-tools svg { width: 16px; height: 16px; }
.dock-tools .hot { border-color: #005499; background: #cce4f7; }
.tree-wrap { flex: 1; min-height: 0; display: flex; margin-right: 1px; background: #fff; }
.tree {
  flex: 1; min-width: 0; margin: 0; padding: 0 0 0 24px; list-style: none; overflow: hidden;
  background:
    repeating-linear-gradient(#888 0 1px, transparent 1px 2px) 9px 0 / 1px 100% no-repeat,
    repeating-linear-gradient(#888 0 1px, transparent 1px 2px) 28px 0 / 1px 100% no-repeat;
}
.tree li { display: flex; align-items: center; height: 16px; white-space: nowrap; background: repeating-linear-gradient(90deg, #888 0 1px, transparent 1px 2px) 4px 8px / 11px 1px no-repeat; }
.tree svg { width: 15px; height: 13px; margin: 0 0 1px 6px; }
.tree .leaf svg { margin-left: 15px; }
.tree span { margin-left: 4px; padding: 2px 2px 0; line-height: 14px; }
.tree .sel span { background: #ffb766; }
.plus {
  flex: none; width: 9px; height: 9px; border: 1px solid #919191; border-radius: 1px;
  background:
    linear-gradient(#2b4a9a, #2b4a9a) 1px 3px / 5px 1px no-repeat,
    linear-gradient(#2b4a9a, #2b4a9a) 3px 1px / 1px 5px no-repeat, #f2f2f2;
}
.vscroll { flex: none; width: 16px; display: flex; flex-direction: column; align-items: center; padding: 6px 0; background: #f0f0f0; }
.vscroll svg, .hscroll svg { width: 8px; height: 6px; }
.vscroll .thumb { width: 15px; flex: 176 0 0; margin: 26px 0 0; background: #cdcdcd; }
.vscroll::after { content: ""; order: 1; flex: 189 0 0; }
.vscroll .flip { order: 2; transform: rotate(180deg); }
.hscroll { flex: none; display: flex; align-items: center; height: 17px; margin-right: 1px; padding: 0 20px 0 2px; background: #f0f0f0; }
.hscroll .thumb { flex: 1; height: 15px; margin: 0 12px 0 5px; background: #cdcdcd; }
.hscroll .left { transform: rotate(-90deg); }
.hscroll .right { transform: rotate(90deg); }
.dock-tabs { flex: none; display: flex; height: 24px; align-items: flex-start; border-top: 1px solid #f5a54a; }
.dock-tabs button { display: flex; align-items: center; gap: 3px; height: 20px; padding: 0 4px 0 3px; border: 1px solid #3b61a8; border-top: 0; border-radius: 0 0 3px 3px; background: linear-gradient(#dce9fc, #9fc0f4); }
.dock-tabs svg { width: 16px; height: 16px; }
.dock-tabs .cur { background: linear-gradient(#ffe0b5, #ffbd69); }

/* documents */
.docs { position: relative; flex: 1; min-width: 0; display: flex; flex-direction: column; }
.doc-tabs { flex: none; display: flex; height: 21px; padding-top: 1px; background: #dce9fc; }
.tab { flex: 0 1 150px; min-width: 0; display: flex; align-items: center; padding: 0 4px 1px 4px; border: 1px solid #1f4a9c; border-bottom: 0; border-radius: 4px 4px 0 0; background: linear-gradient(#e6f0ff, #a9c6f5); white-space: nowrap; overflow: hidden; }
.tab span { flex: 1; min-width: 0; overflow: hidden; }
.tab button, .tab svg { flex: none; }
.tab button { display: flex; width: 11px; padding-left: 1px; }
.w { width: 15px; height: 13px; margin-right: 4px; }
.tab.first { flex-basis: 67px; border-left: 0; border-radius: 0; padding-left: 0; }
.tab.beside { flex-basis: 124px; padding-right: 0; border-right: 0; }
.tab.cur { position: relative; flex-basis: 117px; margin-left: -7px; overflow: visible; padding-left: 19px; border-left: 0; border-top: 0; border-radius: 0 4px 0 0; background: linear-gradient(#ffe3bd, #ffbd69) 20px 0 no-repeat; }
.tab.cur .w { position: relative; }
.slant { position: absolute; left: 0; top: -1px; width: 20px; height: 21px; }
.tab-nav { flex: 1; display: flex; justify-content: flex-end; align-items: center; padding: 0 3px 4px 0; }
.tab-nav svg { width: 50px; height: 10px; }
.mdi { flex: 1; min-height: 0; display: flex; border: 1px solid #3b61a8; box-shadow: inset 0 0 0 1px #fac080, inset 2px 2px 0 1px #808080; background: #e6f0fb; padding: 3px 2px 7px 4px; }
.window { flex: 1; min-width: 0; display: flex; flex-direction: column; border-left: 1px solid #000; border-top: 1px solid #000; border-bottom: 1px solid #000; padding: 1px 0 8px 7px; background: #b9d1ea; box-shadow: 0 5px 0 -1px #e6f0fb, 0 5px 0 0 #555; }
.caption { flex: none; display: flex; align-items: center; height: 29px; margin-left: -6px; padding: 5px 0 0 8px; background: linear-gradient(#fff 0 1px, #99b4d1 1px, #b9d1ea); overflow: hidden; }
.caption h1 { flex: 1; }
.caption button { display: flex; align-items: flex-end; justify-content: center; width: 32px; height: 18px; padding-bottom: 4px; border: 1px solid #66809c; border-radius: 2px; background: linear-gradient(#d4e3f3, #a9c3de); box-shadow: inset 0 0 0 1px #dce9f6; }
.caption button i { width: 11px; height: 4px; border: 1px solid #555; background: #fff; }
.caption .max { width: 10px; margin-left: 3px; border-right: 0; border-radius: 2px 0 0 2px; justify-content: flex-end; }
.caption .max i { width: 1px; height: 9px; }
.stage { flex: 1; min-height: 0; display: flex; padding: 16px 0 0 16px; border-left: 1px solid #666; border-top: 1px solid #666; background: #3a6ea5; box-shadow: 0 1px 0 #fff; overflow: hidden; }
.canvas { flex: 1; min-width: 0; height: 100%; }
.canvas text { font-family: "Noto Sans CJK SC", sans-serif; }
.t-title { font-size: 30px; font-weight: 300; fill: #fff; }
.t-label { font-size: 16px; font-weight: 400; fill: #0000c0; }
.t-pass { font-size: 24px; font-weight: 700; fill: #00f; }
.t-main { font-size: 26px; font-weight: 300; fill: #000; }
.mark { position: absolute; right: -5px; top: 222px; font: 24px/28px "Liberation Serif", serif; color: #1e6fd0; text-decoration: none; }
.edge { flex: none; width: 2px; background: #7ba4e0; }
.edge i { display: block; height: 110px; background: #ffbd69; }
```
